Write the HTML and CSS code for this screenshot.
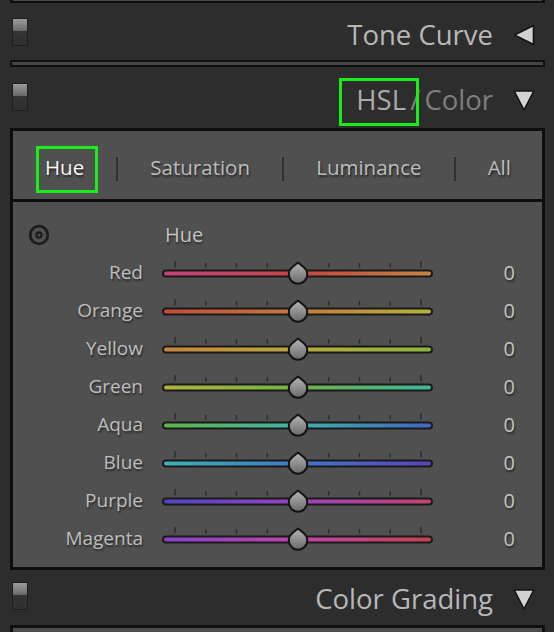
FILE: index.html
```html
<!DOCTYPE html>
<html>
<head>
<meta charset="utf-8">
<link rel="stylesheet" href="styles.css">
</head>
<body>
<div class="app">
  <div class="box-end"></div>

  <div class="hdr hdr-tc">
    <span class="toggle"></span>
    <span class="title">Tone Curve</span>
    <svg class="tri" width="22" height="22" viewBox="0 0 22 22"><polygon points="1.5,11 20.5,1.5 20.5,20.5"/></svg>
  </div>

  <div class="thin-box"></div>

  <div class="hdr hdr-hsl">
    <span class="toggle"></span>
    <span class="title"><span class="hsl">HSL</span><span class="dim"> / Color</span></span>
    <svg class="tri" width="22" height="22" viewBox="0 0 22 22"><polygon points="1.2,2 20.8,2 11,21"/></svg>
  </div>

  <div class="panel">
    <div class="tabs">
      <span class="tab active">Hue</span><span class="sep"></span>
      <span class="tab">Saturation</span><span class="sep"></span>
      <span class="tab">Luminance</span><span class="sep"></span>
      <span class="tab">All</span>
    </div>

    <div class="sliders">
      <div class="row head">
        <span class="target"><svg width="22" height="22" viewBox="0 0 22 22"><circle cx="11" cy="11" r="8.8" fill="none" stroke="#1c1c1c" stroke-width="2.8"/><circle cx="11" cy="11" r="2.6" fill="none" stroke="#1c1c1c" stroke-width="2.2"/></svg></span>
        <span class="head-label">Hue</span>
        <span></span>
      </div>

      <div class="row">
        <span class="lbl">Red</span>
        <svg class="slider" width="275" height="38" viewBox="0 0 275 38">
          <defs><linearGradient id="g1" x1="0" x2="1"><stop offset="0" stop-color="#c2427f"/><stop offset=".5" stop-color="#c44545"/><stop offset="1" stop-color="#c5873f"/></linearGradient></defs>
          <path class="ticks" d="M15 8v6.5M45.75 10v4.5M76.5 10v4.5M107.25 10v4.5M168.75 10v4.5M199.5 10v4.5M230.25 10v4.5M261 8v6.5"/>
          <rect class="track" x="3" y="17.5" width="269" height="6" rx="3" fill="url(#g1)"/>
          <path class="thumb" d="M138 9.5 L143.8 14.3 A9.2 9.2 0 1 1 132.2 14.3 Z"/>
        </svg>
        <span class="val">0</span>
      </div>

      <div class="row">
        <span class="lbl">Orange</span>
        <svg class="slider" width="275" height="38" viewBox="0 0 275 38">
          <defs><linearGradient id="g2" x1="0" x2="1"><stop offset="0" stop-color="#c34b3d"/><stop offset=".5" stop-color="#c67b3c"/><stop offset="1" stop-color="#b4b33c"/></linearGradient></defs>
          <path class="ticks" d="M15 8v6.5M45.75 10v4.5M76.5 10v4.5M107.25 10v4.5M168.75 10v4.5M199.5 10v4.5M230.25 10v4.5M261 8v6.5"/>
          <rect class="track" x="3" y="17.5" width="269" height="6" rx="3" fill="url(#g2)"/>
          <path class="thumb" d="M138 9.5 L143.8 14.3 A9.2 9.2 0 1 1 132.2 14.3 Z"/>
        </svg>
        <span class="val">0</span>
      </div>

      <div class="row">
        <span class="lbl">Yellow</span>
        <svg class="slider" width="275" height="38" viewBox="0 0 275 38">
          <defs><linearGradient id="g3" x1="0" x2="1"><stop offset="0" stop-color="#c7853c"/><stop offset=".5" stop-color="#b9aa3b"/><stop offset="1" stop-color="#8db63f"/></linearGradient></defs>
          <path class="ticks" d="M15 8v6.5M45.75 10v4.5M76.5 10v4.5M107.25 10v4.5M168.75 10v4.5M199.5 10v4.5M230.25 10v4.5M261 8v6.5"/>
          <rect class="track" x="3" y="17.5" width="269" height="6" rx="3" fill="url(#g3)"/>
          <path class="thumb" d="M138 9.5 L143.8 14.3 A9.2 9.2 0 1 1 132.2 14.3 Z"/>
        </svg>
        <span class="val">0</span>
      </div>

      <div class="row">
        <span class="lbl">Green</span>
        <svg class="slider" width="275" height="38" viewBox="0 0 275 38">
          <defs><linearGradient id="g4" x1="0" x2="1"><stop offset="0" stop-color="#b3b33c"/><stop offset=".5" stop-color="#6fb544"/><stop offset="1" stop-color="#3fb49f"/></linearGradient></defs>
          <path class="ticks" d="M15 8v6.5M45.75 10v4.5M76.5 10v4.5M107.25 10v4.5M168.75 10v4.5M199.5 10v4.5M230.25 10v4.5M261 8v6.5"/>
          <rect class="track" x="3" y="17.5" width="269" height="6" rx="3" fill="url(#g4)"/>
          <path class="thumb" d="M138 9.5 L143.8 14.3 A9.2 9.2 0 1 1 132.2 14.3 Z"/>
        </svg>
        <span class="val">0</span>
      </div>

      <div class="row">
        <span class="lbl">Aqua</span>
        <svg class="slider" width="275" height="38" viewBox="0 0 275 38">
          <defs><linearGradient id="g5" x1="0" x2="1"><stop offset="0" stop-color="#5db649"/><stop offset=".5" stop-color="#3fb3a8"/><stop offset="1" stop-color="#4064c2"/></linearGradient></defs>
          <path class="ticks" d="M15 8v6.5M45.75 10v4.5M76.5 10v4.5M107.25 10v4.5M168.75 10v4.5M199.5 10v4.5M230.25 10v4.5M261 8v6.5"/>
          <rect class="track" x="3" y="17.5" width="269" height="6" rx="3" fill="url(#g5)"/>
          <path class="thumb" d="M138 9.5 L143.8 14.3 A9.2 9.2 0 1 1 132.2 14.3 Z"/>
        </svg>
        <span class="val">0</span>
      </div>

      <div class="row">
        <span class="lbl">Blue</span>
        <svg class="slider" width="275" height="38" viewBox="0 0 275 38">
          <defs><linearGradient id="g6" x1="0" x2="1"><stop offset="0" stop-color="#3fb0b3"/><stop offset=".5" stop-color="#3f79c4"/><stop offset="1" stop-color="#5b42bd"/></linearGradient></defs>
          <path class="ticks" d="M15 8v6.5M45.75 10v4.5M76.5 10v4.5M107.25 10v4.5M168.75 10v4.5M199.5 10v4.5M230.25 10v4.5M261 8v6.5"/>
          <rect class="track" x="3" y="17.5" width="269" height="6" rx="3" fill="url(#g6)"/>
          <path class="thumb" d="M138 9.5 L143.8 14.3 A9.2 9.2 0 1 1 132.2 14.3 Z"/>
        </svg>
        <span class="val">0</span>
      </div>

      <div class="row">
        <span class="lbl">Purple</span>
        <svg class="slider" width="275" height="38" viewBox="0 0 275 38">
          <defs><linearGradient id="g7" x1="0" x2="1"><stop offset="0" stop-color="#4f47c2"/><stop offset=".5" stop-color="#9a42c0"/><stop offset="1" stop-color="#c4456e"/></linearGradient></defs>
          <path class="ticks" d="M15 8v6.5M45.75 10v4.5M76.5 10v4.5M107.25 10v4.5M168.75 10v4.5M199.5 10v4.5M230.25 10v4.5M261 8v6.5"/>
          <rect class="track" x="3" y="17.5" width="269" height="6" rx="3" fill="url(#g7)"/>
          <path class="thumb" d="M138 9.5 L143.8 14.3 A9.2 9.2 0 1 1 132.2 14.3 Z"/>
        </svg>
        <span class="val">0</span>
      </div>

      <div class="row">
        <span class="lbl">Magenta</span>
        <svg class="slider" width="275" height="38" viewBox="0 0 275 38">
          <defs><linearGradient id="g8" x1="0" x2="1"><stop offset="0" stop-color="#8443c6"/><stop offset=".5" stop-color="#c043ab"/><stop offset="1" stop-color="#c4434e"/></linearGradient></defs>
          <path class="ticks" d="M15 8v6.5M45.75 10v4.5M76.5 10v4.5M107.25 10v4.5M168.75 10v4.5M199.5 10v4.5M230.25 10v4.5M261 8v6.5"/>
          <rect class="track" x="3" y="17.5" width="269" height="6" rx="3" fill="url(#g8)"/>
          <path class="thumb" d="M138 9.5 L143.8 14.3 A9.2 9.2 0 1 1 132.2 14.3 Z"/>
        </svg>
        <span class="val">0</span>
      </div>
    </div>
  </div>

  <div class="hdr hdr-cg">
    <span class="toggle"></span>
    <span class="title">Color Grading</span>
    <svg class="tri" width="22" height="22" viewBox="0 0 22 22"><polygon points="1.2,2 20.8,2 11,21"/></svg>
  </div>

  <div class="box-start"></div>
</div>

<svg class="defs" width="0" height="0">
  <defs>
    <linearGradient id="thumbFill" x1="0" y1="0" x2="0" y2="1">
      <stop offset="0" stop-color="#b6b6b6"/>
      <stop offset="0.55" stop-color="#8c8c8c"/>
      <stop offset="1" stop-color="#6a6a6a"/>
    </linearGradient>
  </defs>
</svg>
</body>
</html>
```

FILE: styles.css
```css
* {
  box-sizing: border-box;
  margin: 0;
  padding: 0;
}

html, body {
  background: #2d2d2d;
}

body {
  width: 554px;
  height: 632px;
  overflow: hidden;
  font-family: "Open Sans", "Noto Sans", sans-serif;
}

.app {
  width: 554px;
}

.defs {
  display: block;
  width: 0;
  height: 0;
}

/* panel fragments */
.box-end {
  margin: 0 9px 0 10px;
  height: 3px;
  background: #474747;
  border-style: solid;
  border-color: #0f0f0f;
  border-width: 0 3px 2px 3px;
}

.thin-box {
  margin: 0 9px 0 10px;
  height: 7px;
  background: #454545;
  border: 2px solid #0f0f0f;
}

.box-start {
  margin: 0 9px 0 10px;
  height: 12px;
  background: #4c4c4c;
  border-style: solid;
  border-color: #0f0f0f;
  border-width: 3px 3px 0 3px;
}

/* headers */
.hdr {
  display: flex;
  align-items: center;
  padding: 0 19px 0 12px;
}

.hdr-tc {
  height: 57px;
  padding-top: 7px;
}

.hdr-hsl {
  height: 61px;
  padding-top: 5px;
}

.hdr-cg {
  height: 55px;
  padding-top: 3px;
}

.toggle {
  width: 16px;
  height: 28px;
  margin-bottom: 6px;
  border: 1px solid #1e1e1e;
  border-radius: 1px;
  background: linear-gradient(#9a9a9a, #6c6c6c 44%, #343434 46%, #2f2f2f);
}

.title {
  margin-left: auto;
  font-size: 27.5px;
  line-height: 36px;
  color: #b8b8b8;
}

.tri {
  margin-left: 20px;
}

.tri polygon {
  fill: #d2d2d2;
  stroke: #141414;
  stroke-width: 1.6;
  stroke-linejoin: round;
}

.hsl {
  position: relative;
  display: inline-block;
  color: #ababab;
}

.hsl::after {
  content: "";
  position: absolute;
  left: -17px;
  right: -13px;
  top: calc(50% - 22px);
  height: 42px;
  border: 3px solid #1aee1a;
}

.dim {
  color: #7e7e7e;
  word-spacing: -3px;
}

/* main panel */
.panel {
  margin: 0 9px 0 10px;
  background: #505050;
  border: 3px solid #0e0e0e;
}

.tabs {
  height: 71px;
  padding: 4px 31px 0 32px;
  border-bottom: 3px solid #0e0e0e;
  display: flex;
  align-items: center;
  justify-content: space-between;
}

.tab {
  position: relative;
  font-size: 20.5px;
  line-height: 28px;
  color: #bdbdbd;
  text-shadow: 1px 2px 2px rgba(0, 0, 0, 0.55);
}

.tab.active {
  color: #f6f6f6;
}

.tab.active::after {
  content: "";
  position: absolute;
  left: -9px;
  right: -14px;
  top: calc(50% - 21px);
  height: 41px;
  border: 3px solid #1aee1a;
}

.sep {
  width: 2px;
  height: 24px;
  margin-top: 4px;
  background: #303030;
}

.sliders {
  padding: 14px 0 10px;
}

.row {
  display: grid;
  grid-template-columns: 130px 275px 1fr;
  column-gap: 17px;
  height: 38px;
  align-items: center;
}

.row.head {
  height: 37px;
}

.target {
  display: flex;
  margin-left: 15px;
}

.head-label {
  padding-left: 5px;
  font-size: 20px;
  color: #c2c2c2;
  text-shadow: 1px 2px 2px rgba(0, 0, 0, 0.45);
}

.lbl {
  text-align: right;
  font-size: 19px;
  color: #bebebe;
  text-shadow: 1px 2px 2px rgba(0, 0, 0, 0.5);
}

.val {
  text-align: right;
  padding-right: 27px;
  font-size: 20px;
  color: #c4c4c4;
  text-shadow: 1px 2px 2px rgba(0, 0, 0, 0.5);
}

.slider {
  display: block;
}

.ticks {
  stroke: #2a2a2a;
  stroke-width: 1.4;
  fill: none;
}

.track {
  stroke: #1a1a1a;
  stroke-width: 2;
}

.thumb {
  fill: url(#thumbFill);
  stroke: #141414;
  stroke-width: 2;
  stroke-linejoin: round;
}
```
